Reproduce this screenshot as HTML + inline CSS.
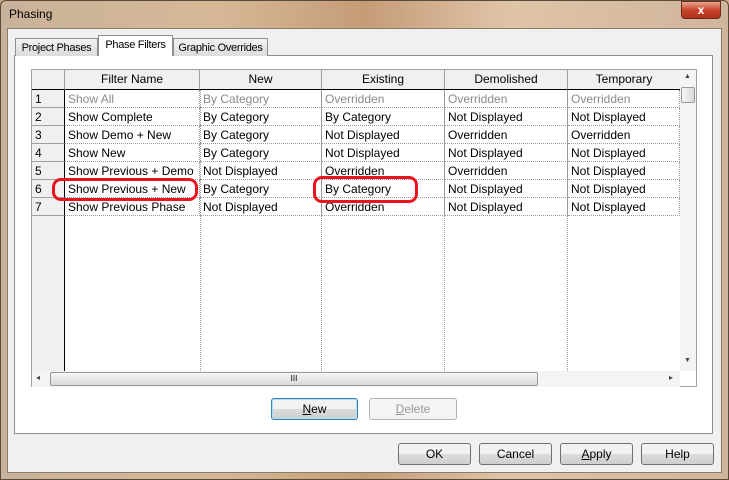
<!DOCTYPE html>
<html><head><style>
*{box-sizing:border-box;margin:0;padding:0}
body{width:729px;height:480px;overflow:hidden;font-family:"Liberation Sans",sans-serif;font-size:12px;background:#c9a888;position:relative}
.a{position:absolute}
.frame{left:0;top:0;width:729px;height:480px;background:linear-gradient(90deg,#c9b29a,#d6b896 30%,#c59c78 50%,#e0c4a8 70%,#cfb59c);border:1px solid #5a4a3a;border-radius:6px 6px 0 0}
.client{left:7px;top:28px;width:715px;height:445px;background:#f0f0f0;border:1px solid #8a7a68}
.tab{top:38px;height:18px;border:1px solid #8e8f8f;border-bottom:none;background:linear-gradient(#f2f2f2,#dcdcdc);padding:3px 0 0;font-size:11px;color:#000;white-space:nowrap;text-align:center;letter-spacing:-0.3px;overflow:hidden}
.panel{left:14px;top:55px;width:699px;height:379px;background:#fff;border:1px solid #8e8f8f}
.grid{left:31px;top:69px;width:666px;height:318px;background:#fff;border:1px solid #a0a0a0}
.hd{top:70px;height:20px;background:#f0f0f0;border-right:1px solid #a0a0a0;border-bottom:1px solid #000;text-align:center;line-height:19px}
.rh{left:32px;width:33px;height:18px;background:#f0f0f0;border-bottom:1px solid #a0a0a0;border-right:1px solid #000;padding-left:3px;line-height:18px}
.c{height:18px;line-height:18px;padding-left:3px;border-right:1px dotted #999;border-bottom:1px dotted #999;white-space:nowrap;overflow:hidden}
.g{color:#8a8a8a}
.btn{height:22px;border:1px solid #707070;border-radius:3px;background:linear-gradient(#f2f2f2 50%,#dcdcdc 50%,#cfcfcf);text-align:center;line-height:20px}
.ring{border:3px solid #e8151f;border-radius:9px}
</style></head><body>
<div class="a frame"></div>
<div class="a" style="left:9px;top:7px;font-size:12px">Phasing</div>
<div class="a" style="left:681px;top:1px;width:40px;height:18px;border:1px solid #6b2a1c;border-radius:0 0 4px 4px;background:linear-gradient(#e8a890,#c7452a 50%,#b0301a);color:#fff;text-align:center;font-weight:bold;line-height:16px">x</div>
<div class="a client"></div>
<div class="a panel"></div>
<div class="a tab" style="left:15px;width:83px">Project Phases</div>
<div class="a tab" style="left:98px;top:35px;height:21px;width:75px;background:#fff;z-index:2">Phase Filters</div>
<div class="a tab" style="left:173px;width:95px">Graphic Overrides</div>
<div class="a grid"></div>
<div class="a" style="left:32px;top:90px;width:33px;height:281px;background:#f0f0f0;border-right:1px solid #000"></div>
<div class="a hd" style="left:32px;width:33px"></div>
<div class="a hd" style="left:65px;width:135px">Filter Name</div>
<div class="a hd" style="left:200px;width:122px">New</div>
<div class="a hd" style="left:322px;width:123px">Existing</div>
<div class="a hd" style="left:445px;width:123px">Demolished</div>
<div class="a hd" style="left:568px;width:113px">Temporary</div>
<div class="a" style="left:200px;top:90px;height:281px;border-left:1px dotted #999"></div>
<div class="a" style="left:321px;top:90px;height:281px;border-left:1px dotted #999"></div>
<div class="a" style="left:444px;top:90px;height:281px;border-left:1px dotted #999"></div>
<div class="a" style="left:567px;top:90px;height:281px;border-left:1px dotted #999"></div>
<div class="a" style="left:65px;top:90px;width:615px">
<div style="display:grid;grid-template-columns:135px 122px 123px 123px 112px">
<div class="c g">Show All</div><div class="c g">By Category</div><div class="c g">Overridden</div><div class="c g">Overridden</div><div class="c g">Overridden</div>
<div class="c">Show Complete</div><div class="c">By Category</div><div class="c">By Category</div><div class="c">Not Displayed</div><div class="c">Not Displayed</div>
<div class="c">Show Demo + New</div><div class="c">By Category</div><div class="c">Not Displayed</div><div class="c">Overridden</div><div class="c">Overridden</div>
<div class="c">Show New</div><div class="c">By Category</div><div class="c">Not Displayed</div><div class="c">Not Displayed</div><div class="c">Not Displayed</div>
<div class="c">Show Previous + Demo</div><div class="c">Not Displayed</div><div class="c">Overridden</div><div class="c">Overridden</div><div class="c">Not Displayed</div>
<div class="c">Show Previous + New</div><div class="c">By Category</div><div class="c">By Category</div><div class="c">Not Displayed</div><div class="c">Not Displayed</div>
<div class="c">Show Previous Phase</div><div class="c">Not Displayed</div><div class="c">Overridden</div><div class="c">Not Displayed</div><div class="c">Not Displayed</div>
</div></div>
<div class="a rh" style="top:90px">1</div><div class="a rh" style="top:108px">2</div><div class="a rh" style="top:126px">3</div><div class="a rh" style="top:144px">4</div><div class="a rh" style="top:162px">5</div><div class="a rh" style="top:180px">6</div><div class="a rh" style="top:198px">7</div>
<div class="a" style="left:680px;top:70px;width:16px;height:301px;background:#f4f4f4"></div>
<div class="a" style="left:684px;top:73px;font-size:7px;color:#444">▲</div>
<div class="a" style="left:681px;top:87px;width:14px;height:16px;border:1px solid #999;border-radius:2px;background:linear-gradient(90deg,#f6f6f6,#dadada)"></div>
<div class="a" style="left:684px;top:357px;font-size:7px;color:#444">▼</div>
<div class="a" style="left:32px;top:371px;width:648px;height:16px;background:#f4f4f4"></div>
<div class="a" style="left:36px;top:373px;font-size:8px;color:#444">◂</div>
<div class="a" style="left:50px;top:372px;width:488px;height:14px;border:1px solid #999;border-radius:2px;background:linear-gradient(#f6f6f6,#d8d8d8);text-align:center;font-size:8px;line-height:12px">III</div>
<div class="a" style="left:669px;top:373px;font-size:8px;color:#444">▸</div>
<div class="a btn" style="left:271px;top:398px;width:87px;border-color:#3c7fb1;box-shadow:inset 0 0 0 1px #a7e0f8"><u>N</u>ew</div>
<div class="a btn" style="left:369px;top:398px;width:88px;color:#999;border-color:#adb2b5;background:#f4f4f4"><u>D</u>elete</div>
<div class="a btn" style="left:398px;top:443px;width:73px">OK</div>
<div class="a btn" style="left:479px;top:443px;width:73px">Cancel</div>
<div class="a btn" style="left:560px;top:443px;width:73px"><u>A</u>pply</div>
<div class="a btn" style="left:641px;top:443px;width:73px">Help</div>
<div class="a ring" style="left:52px;top:178px;width:146px;height:23px"></div>
<div class="a ring" style="left:313px;top:176px;width:105px;height:27px"></div>
</body></html>
